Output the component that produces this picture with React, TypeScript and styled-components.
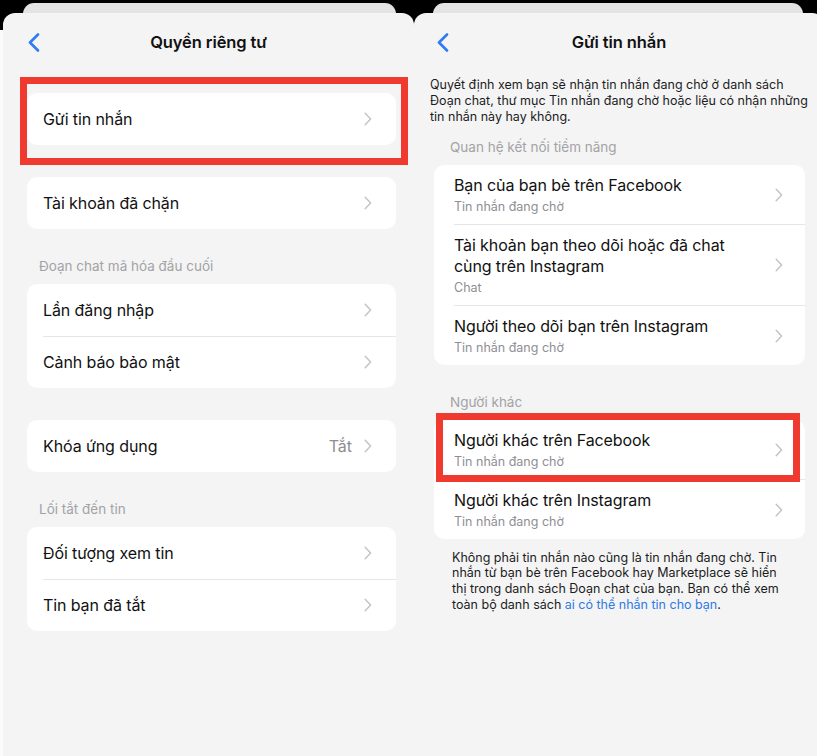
import styled, { createGlobalStyle } from 'styled-components';

const GlobalStyle = createGlobalStyle`
  html, body {
    margin: 0;
    padding: 0;
  }
  body {
    background: linear-gradient(#000 0 30px, #fbfbfb 30px);
    font-family: Inter, 'Noto Sans', 'Liberation Sans', sans-serif;
    color: #111;
    overflow: hidden;
  }
`;

type Item = {
  title: string[];
  subtitle?: string;
  value?: string;
};

const Chevron = () => (
  <ChevronSvg width='8' height='14' viewBox='0 0 8 14'>
    <path d='M1.2 1.2 L6.6 7 L1.2 12.8' fill='none' stroke='#c4c4c7' strokeWidth='1.5' strokeLinecap='round' strokeLinejoin='round' />
  </ChevronSvg>
);

const BackIcon = () => (
  <svg width='12' height='19' viewBox='0 0 12 19'>
    <path d='M10 1.5 L2 9.5 L10 17.5' fill='none' stroke='#2f7bf2' strokeWidth='2.6' strokeLinecap='round' strokeLinejoin='round' />
  </svg>
);

const NavHeader = ({ title, inset }: { title: string; inset: number }) => (
  <NavBar $inset={inset}>
    <BackIcon />
    <NavTitle>{title}</NavTitle>
    <span />
  </NavBar>
);

const SimpleCard = ({ items, inset }: { items: Item[]; inset: number }) => (
  <Card>
    {items.map((item, i) => (
      <SimpleRow key={i} $first={i === 0} $inset={inset}>
        <RowTitle>{item.title[0]}</RowTitle>
        <RowEnd>
          {item.value && <RowValue>{item.value}</RowValue>}
          <Chevron />
        </RowEnd>
      </SimpleRow>
    ))}
  </Card>
);

const DetailCard = ({ items }: { items: Item[] }) => (
  <Card>
    {items.map((item, i) => (
      <DetailRow key={i} $first={i === 0}>
        <DetailText>
          {item.title.map((line) => (
            <DetailTitle key={line}>{line}</DetailTitle>
          ))}
          <DetailSubtitle>{item.subtitle}</DetailSubtitle>
        </DetailText>
        <Chevron />
      </DetailRow>
    ))}
  </Card>
);

export default function App() {
  return (
    <>
      <GlobalStyle />
      <Page>
        <Screen $width={411} $offset={3}>
          <StackedCard $left={20} $right={18} />
          <Sheet>
            <NavHeader title='Quyền riêng tư' inset={25} />
            <LeftContent>
              <Spacer $h={22} />
              <SimpleCard items={[{ title: ['Gửi tin nhắn'] }]} inset={16} />
              <Spacer $h={32} />
              <SimpleCard items={[{ title: ['Tài khoản đã chặn'] }]} inset={16} />
              <SectionLabel $inset={12} $top={28}>Đoạn chat mã hóa đầu cuối</SectionLabel>
              <SimpleCard items={[{ title: ['Lần đăng nhập'] }, { title: ['Cảnh báo bảo mật'] }]} inset={16} />
              <Spacer $h={32} />
              <SimpleCard items={[{ title: ['Khóa ứng dụng'], value: 'Tắt' }]} inset={16} />
              <SectionLabel $inset={12} $top={28}>Lối tắt đến tin</SectionLabel>
              <SimpleCard items={[{ title: ['Đối tượng xem tin'] }, { title: ['Tin bạn đã tắt'] }]} inset={16} />
            </LeftContent>
            <Highlight style={{ left: 17, top: 64, width: 388, height: 88 }} />
          </Sheet>
        </Screen>

        <Screen $width={410} $offset={0}>
          <StackedCard $left={19} $right={21} />
          <Sheet>
            <NavHeader title='Gửi tin nhắn' inset={23} />
            <Intro>
              Quyết định xem bạn sẽ nhận tin nhắn đang chờ ở danh sách
              <br />
              Đoạn chat, thư mục Tin nhắn đang chờ hoặc liệu có nhận những
              <br />
              tin nhắn này hay không.
            </Intro>
            <RightContent>
              <SectionLabel $inset={16} $top={13}>Quan hệ kết nối tiềm năng</SectionLabel>
              <DetailCard
                items={[
                  { title: ['Bạn của bạn bè trên Facebook'], subtitle: 'Tin nhắn đang chờ' },
                  { title: ['Tài khoản bạn theo dõi hoặc đã chat', 'cùng trên Instagram'], subtitle: 'Chat' },
                  { title: ['Người theo dõi bạn trên Instagram'], subtitle: 'Tin nhắn đang chờ' },
                ]}
              />
              <SectionLabel $inset={16} $top={28}>Người khác</SectionLabel>
              <DetailCard
                items={[
                  { title: ['Người khác trên Facebook'], subtitle: 'Tin nhắn đang chờ' },
                  { title: ['Người khác trên Instagram'], subtitle: 'Tin nhắn đang chờ' },
                ]}
              />
              <FooterNote>
                Không phải tin nhắn nào cũng là tin nhắn đang chờ. Tin
                <br />
                nhắn từ bạn bè trên Facebook hay Marketplace sẽ hiển
                <br />
                thị trong danh sách Đoạn chat của bạn. Bạn có thể xem
                <br />
                toàn bộ danh sách <FooterLink>ai có thể nhắn tin cho bạn</FooterLink>.
              </FooterNote>
            </RightContent>
            <Highlight style={{ left: 22, top: 400, width: 364, height: 69 }} />
          </Sheet>
        </Screen>
      </Page>
    </>
  );
}

const Page = styled.div`
  display: flex;
  width: 817px;
  height: 756px;
  overflow: hidden;
`;

const Screen = styled.div<{ $width: number; $offset: number }>`
  flex: none;
  width: ${(p) => p.$width}px;
  margin-left: ${(p) => p.$offset}px;
  display: flex;
  flex-direction: column;
`;

const StackedCard = styled.div<{ $left: number; $right: number }>`
  height: 20px;
  margin: 3px ${(p) => p.$right}px 0 ${(p) => p.$left}px;
  background: #e3e3e3;
  border-radius: 11px 11px 0 0;
`;

const Sheet = styled.div`
  position: relative;
  margin-top: -10px;
  height: 760px;
  background: #f4f4f4;
  border-radius: 12px 12px 0 0;
`;

const NavBar = styled.div<{ $inset: number }>`
  height: 58px;
  display: grid;
  grid-template-columns: 40px 1fr 40px;
  align-items: center;
  padding: 0 ${(p) => p.$inset}px;

  svg {
    margin-top: 1px;
  }
`;

const NavTitle = styled.div`
  text-align: center;
  font-size: 16.5px;
  font-weight: 600;
  letter-spacing: -0.1px;
  margin: 0 -25px;
`;

const LeftContent = styled.div`
  display: flex;
  flex-direction: column;
  padding: 0 18px 0 24px;
`;

const RightContent = styled.div`
  display: flex;
  flex-direction: column;
  padding: 0 19px 0 20px;
`;

const Spacer = styled.div<{ $h: number }>`
  height: ${(p) => p.$h}px;
`;

const SectionLabel = styled.div<{ $inset: number; $top: number }>`
  margin: ${(p) => p.$top}px 0 9px ${(p) => p.$inset}px;
  height: 18px;
  line-height: 18px;
  font-size: 13.5px;
  color: #a3a3a6;
`;

const Card = styled.div`
  background: #fff;
  border-radius: 10px;
  overflow: hidden;
`;

const SimpleRow = styled.div<{ $first: boolean; $inset: number }>`
  box-sizing: border-box;
  height: 52px;
  display: flex;
  align-items: center;
  justify-content: space-between;
  margin-left: ${(p) => p.$inset}px;
  padding-right: 24px;
  border-top: ${(p) => (p.$first ? 'none' : '1px solid #e6e6e8')};
`;

const RowTitle = styled.span`
  font-size: 16px;
  letter-spacing: -0.1px;
`;

const RowEnd = styled.span`
  display: flex;
  align-items: center;
  gap: 12px;
`;

const RowValue = styled.span`
  font-size: 16px;
  color: #8e8e93;
`;

const ChevronSvg = styled.svg`
  flex: none;
  display: block;
`;

const DetailRow = styled.div<{ $first: boolean }>`
  display: flex;
  align-items: center;
  justify-content: space-between;
  margin-left: 20px;
  padding: 10px 22px 9px 0;
  border-top: ${(p) => (p.$first ? 'none' : '1px solid #e6e6e8')};
`;

const DetailText = styled.div`
  display: flex;
  flex-direction: column;
`;

const DetailTitle = styled.span`
  font-size: 16px;
  line-height: 21px;
  letter-spacing: -0.1px;
`;

const DetailSubtitle = styled.span`
  margin-top: 2px;
  font-size: 12.5px;
  line-height: 17px;
  color: #8e8e93;
`;

const Intro = styled.p`
  margin: 6px 0 0 16px;
  font-size: 12.5px;
  line-height: 16px;
  white-space: nowrap;
  color: #1c1c1e;
`;

const FooterNote = styled.p`
  margin: 11px 0 0 18px;
  font-size: 12.5px;
  line-height: 15.7px;
  white-space: nowrap;
  color: #1c1c1e;
`;

const FooterLink = styled.span`
  color: #2e7ae6;
`;

const Highlight = styled.div`
  position: absolute;
  box-sizing: border-box;
  border: 7px solid #f03a30;
  pointer-events: none;
`;
